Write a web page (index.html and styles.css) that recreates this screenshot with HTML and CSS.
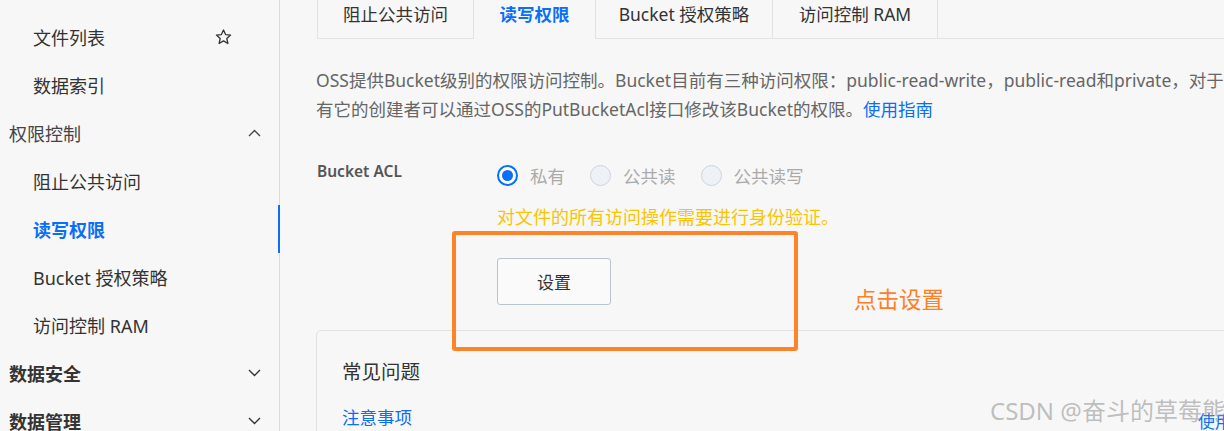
FILE: index.html
```html
<!DOCTYPE html>
<html lang="zh-CN">
<head>
    <meta charset="UTF-8">
    <meta name="viewport" content="width=device-width, initial-scale=1.0">
    <title>读写权限</title>
    <link rel="stylesheet" href="styles.css">
</head>
<body>
    <div class="page">
        <aside class="menu">
            <div class="menuItem sub">
                <span>文件列表</span>
                <svg class="star" width="17" height="16" viewBox="0 0 17 16"><polygon points="8.5,1 10.6,5.6 15.6,6.1 11.8,9.5 12.9,14.5 8.5,11.9 4.1,14.5 5.2,9.5 1.4,6.1 6.4,5.6" fill="none" stroke="#333" stroke-width="1.3" stroke-linejoin="round"/></svg>
            </div>
            <div class="menuItem sub">数据索引</div>
            <div class="menuItem group">
                <span>权限控制</span>
                <svg width="13" height="8" viewBox="0 0 13 8"><polyline points="1,7 6.5,1.5 12,7" fill="none" stroke="#444" stroke-width="1.4"/></svg>
            </div>
            <div class="menuItem sub">阻止公共访问</div>
            <div class="menuItem sub active">读写权限</div>
            <div class="menuItem sub">Bucket 授权策略</div>
            <div class="menuItem sub">访问控制 RAM</div>
            <div class="menuItem group bold">
                <span>数据安全</span>
                <svg width="13" height="8" viewBox="0 0 13 8"><polyline points="1,1 6.5,6.5 12,1" fill="none" stroke="#333" stroke-width="1.4"/></svg>
            </div>
            <div class="menuItem group bold">
                <span>数据管理</span>
                <svg width="13" height="8" viewBox="0 0 13 8"><polyline points="1,1 6.5,6.5 12,1" fill="none" stroke="#333" stroke-width="1.4"/></svg>
            </div>
        </aside>

        <main class="content">
            <div class="tabs">
                <div class="tab t1">阻止公共访问</div>
                <div class="tab tabActive t2">读写权限</div>
                <div class="tab t3">Bucket 授权策略</div>
                <div class="tab t4">访问控制 RAM</div>
                <div class="tabRest"></div>
            </div>

            <p class="desc">
                <span class="line">OSS提供Bucket级别的权限访问控制。Bucket目前有三种访问权限：public-read-write，public-read和private，对于私有权限的Bucket，只</span>
                <span class="line">有它的创建者可以通过OSS的PutBucketAcl接口修改该Bucket的权限。<a href="#" class="link">使用指南</a></span>
            </p>

            <div class="formRow">
                <div class="formLabel">Bucket ACL</div>
                <div class="formField">
                    <div class="radios">
                        <label class="radio"><span class="dot checked"></span>私有</label>
                        <label class="radio"><span class="dot"></span>公共读</label>
                        <label class="radio"><span class="dot"></span>公共读写</label>
                    </div>
                    <div class="warn">对文件的所有访问操作需要进行身份验证。</div>
                    <button type="button" class="btn">设置</button>
                </div>
            </div>

            <div class="card">
                <div class="cardLeft">
                    <div class="cardTitle">常见问题</div>
                    <a href="#" class="link faq">注意事项</a>
                </div>
                <div class="cardRight">
                    <a href="#" class="link faq2">使用指南</a>
                </div>
            </div>
        </main>
    </div>

    <!-- 标注 -->
    <div class="markBox"></div>
    <div class="markText">点击设置</div>
    <div class="watermark">CSDN @奋斗的草莓熊</div>
</body>
</html>
```

FILE: styles.css
```css
body{
    margin: 0;
    background: #f7f7f7;
    font-family: "Noto Sans", "Noto Sans CJK SC", sans-serif;
    color: #333;
    overflow: hidden;
    height: 431px;
}
.page{
    display: flex;
    height: 431px;
}
.menu{
    width: 279px;
    flex-shrink: 0;
    border-right: 1px solid #d6dce4;
    padding-top: 13px;
}
.menuItem{
    height: 48px;
    display: flex;
    align-items: center;
    justify-content: space-between;
    font-size: 18px;
    color: #333;
    position: relative;
}
.sub{
    padding: 0 18px 0 33px;
}
.group{
    padding: 0 18px 0 9px;
    color: #444;
}
.bold{
    font-weight: 700;
    color: #333;
}
.star{
    margin-right: 29px;
}
.active{
    color: #0a6ef7;
    font-weight: 700;
}
.active::after{
    content: "";
    position: absolute;
    right: -1px;
    top: 0;
    width: 2px;
    height: 48px;
    background: #0a6ef7;
}

.content{
    flex: 1;
    min-width: 0;
    padding-left: 37px;
    overflow: hidden;
}
.tabs{
    display: flex;
    height: 39px;
}
.tab{
    box-sizing: border-box;
    height: 39px;
    padding-top: 2px;
    text-align: center;
    font-size: 17.5px;
    line-height: 24px;
    color: #333;
    border: 1px solid #e3e3e3;
    border-top: none;
    border-left: none;
    white-space: nowrap;
}
.t1{ width: 157px; border-left: 1px solid #e3e3e3; }
.t2{ width: 121px; }
.t3{ width: 178px; border-left: 1px solid #e3e3e3; }
.t4{ width: 165px; }
.tabActive{
    border-bottom: none;
    border-right: none;
    color: #0a6ef7;
    font-weight: 700;
}
.tabRest{
    flex: 1;
    border-bottom: 1px solid #e3e3e3;
}

.desc{
    margin: 27px 0 0 -1px;
    font-size: 17.5px;
    line-height: 29px;
    color: #666;
}
.line{
    display: block;
    white-space: nowrap;
}
.link{
    color: #0a6ef7;
    text-decoration: none;
}

.formRow{
    display: flex;
    margin-top: 36px;
}
.formLabel{
    width: 180px;
    font-size: 15.5px;
    font-weight: 600;
    color: #555;
    line-height: 22px;
}
.radios{
    display: flex;
    height: 30px;
    align-items: center;
    gap: 25px;
}
.radio{
    display: flex;
    align-items: center;
    gap: 12px;
    font-size: 17.5px;
    color: #aaa;
}
.dot{
    box-sizing: border-box;
    width: 21px;
    height: 21px;
    border-radius: 50%;
    border: 1px solid #cad4e0;
    background: #eef2f8;
    position: relative;
}
.checked{
    border: 2px solid #0a6ef7;
    background: #fff;
}
.checked::after{
    content: "";
    position: absolute;
    left: 3px;
    top: 3px;
    width: 11px;
    height: 11px;
    border-radius: 50%;
    background: #0a6ef7;
}
.warn{
    margin-top: 14px;
    font-size: 18px;
    line-height: 26px;
    color: #fbc400;
}
.btn{
    margin-top: 28px;
    width: 114px;
    height: 47px;
    background: #fafafa;
    border: 1px solid #b9c4d1;
    border-radius: 3px;
    font-family: inherit;
    font-size: 17px;
    color: #333;
}

.card{
    margin-top: 25px;
    margin-left: -1px;
    width: 1000px;
    height: 140px;
    border: 1px solid #e3e3e3;
    border-radius: 5px;
    display: grid;
    grid-template-columns: 856px 1fr;
    padding: 27px 0 0 25px;
}
.cardTitle{
    font-size: 19.5px;
    line-height: 28px;
    color: #333;
}
.faq{
    display: block;
    margin-top: 19px;
    font-size: 17.5px;
    line-height: 24px;
}
.faq2{
    display: block;
    margin-top: 52px;
    font-size: 17px;
    line-height: 24px;
}

.markBox{
    position: absolute;
    left: 452px;
    top: 231px;
    width: 346px;
    height: 120px;
    box-sizing: border-box;
    border: 4px solid #ff8429;
    border-radius: 3px;
}
.markText{
    position: absolute;
    left: 854px;
    top: 285px;
    font-size: 22.5px;
    line-height: 30px;
    color: #ff7f24;
}
.watermark{
    position: absolute;
    left: 990px;
    top: 396px;
    font-size: 24px;
    line-height: 30px;
    white-space: nowrap;
    color: rgba(140, 140, 140, 0.55);
}
```
